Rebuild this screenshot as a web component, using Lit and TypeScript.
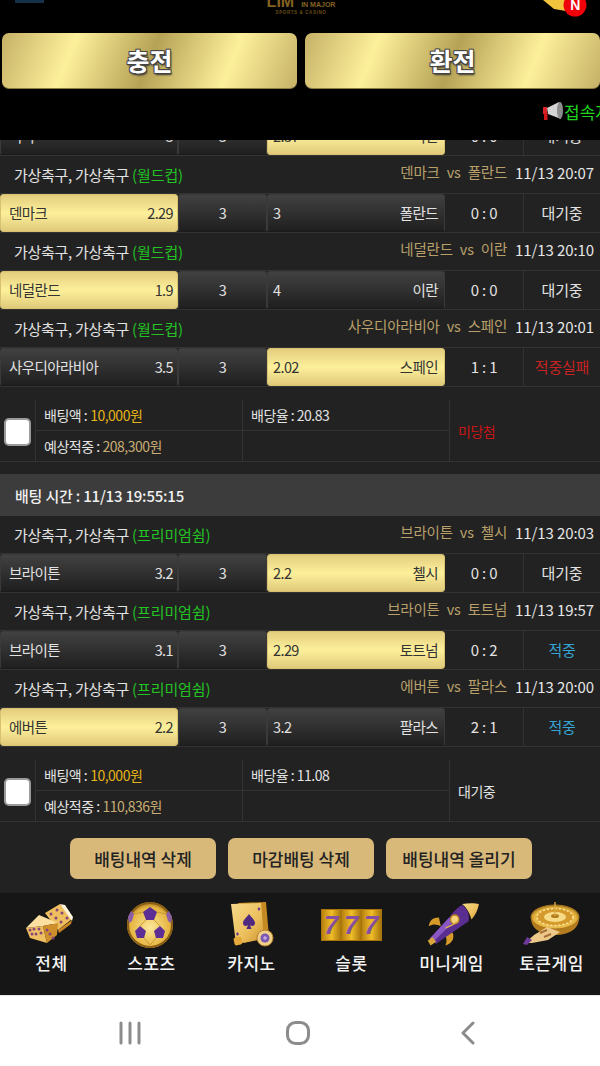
import { LitElement, html, css, svg } from "lit";
import { customElement } from "lit/decorators.js";

const LEAGUE_CUP = "월드컵";
const LEAGUE_PREMIER = "프리미엄쉼";

type Match = {
  league: string;
  home: string;
  away: string;
  time: string;
  homeOdd: string;
  awayOdd: string;
  pick: "home" | "away";
  score: string;
  status: string;
  statusKind?: "fail" | "hit";
};

const firstSlip: Match[] = [
  { league: LEAGUE_CUP, home: "덴마크", away: "폴란드", time: "11/13 20:07", homeOdd: "2.29", awayOdd: "3", pick: "home", score: "0 : 0", status: "대기중" },
  { league: LEAGUE_CUP, home: "네덜란드", away: "이란", time: "11/13 20:10", homeOdd: "1.9", awayOdd: "4", pick: "home", score: "0 : 0", status: "대기중" },
  { league: LEAGUE_CUP, home: "사우디아라비아", away: "스페인", time: "11/13 20:01", homeOdd: "3.5", awayOdd: "2.02", pick: "away", score: "1 : 1", status: "적중실패", statusKind: "fail" },
];

const secondSlip: Match[] = [
  { league: LEAGUE_PREMIER, home: "브라이튼", away: "첼시", time: "11/13 20:03", homeOdd: "3.2", awayOdd: "2.2", pick: "away", score: "0 : 0", status: "대기중" },
  { league: LEAGUE_PREMIER, home: "브라이튼", away: "토트넘", time: "11/13 19:57", homeOdd: "3.1", awayOdd: "2.29", pick: "away", score: "0 : 2", status: "적중", statusKind: "hit" },
  { league: LEAGUE_PREMIER, home: "에버튼", away: "팔라스", time: "11/13 20:00", homeOdd: "2.2", awayOdd: "3.2", pick: "home", score: "2 : 1", status: "적중", statusKind: "hit" },
];

const clipped: Match = { league: LEAGUE_CUP, home: "미국", away: "이란", time: "", homeOdd: "3", awayOdd: "2.37", pick: "away", score: "0 : 0", status: "대기중" };

const goldDefs = svg`
  <linearGradient id="g1" x1="0" y1="0" x2="1" y2="1">
    <stop offset="0" stop-color="#f6d98a" /><stop offset=".6" stop-color="#ecbf5c" /><stop offset="1" stop-color="#c98f2c" />
  </linearGradient>
  <radialGradient id="g2" cx=".5" cy=".55" r=".6">
    <stop offset="0" stop-color="#fbe79a" /><stop offset=".72" stop-color="#e6b540" /><stop offset="1" stop-color="#80570f" />
  </radialGradient>
`;

const dot = (x: number, y: number) => svg`<circle cx=${x} cy=${y} r="1.500" fill="#86467e" />`;

const diceIcon = svg`<svg viewBox="0 0 60 48" width="60" height="48">
  <polygon points="25,12 40,3 52,18 38,29" fill="#efbe5e" />
  <polygon points="40,3 45,4 53,16 52,20" fill="#fff4dc" />
  <polygon points="38,29 52,19 51,23 39,32" fill="#c98524" />
  ${dot(31, 13)} ${dot(37, 9)} ${dot(36, 17)} ${dot(42, 12)} ${dot(41, 21)} ${dot(47, 17)}
  <polygon points="19,14 6,27 23,25 38,22" fill="#fbe0a0" />
  <polygon points="6,27 23,25 27,42 10,37" fill="#f0bf62" />
  <polygon points="23,25 38,22 37,34 27,42" fill="#cf8f2a" />
  ${dot(10, 29)} ${dot(14, 28)} ${dot(19, 28)} ${dot(12, 33)} ${dot(16, 33)} ${dot(21, 32)}
  ${dot(27, 29)} ${dot(30, 33)} ${dot(33, 37)}
</svg>`;

const ballIcon = svg`<svg viewBox="0 0 60 48" width="60" height="48">
  <defs>${goldDefs}</defs>
  <circle cx="30" cy="24" r="23" fill="url(#g2)" />
  <circle cx="30" cy="24" r="22" fill="none" stroke="#8a5e16" stroke-width="2" />
  <polygon points="30,6 37,11 34,19 26,19 23,11" fill="#5d2f94" />
  <polygon points="20,25 26,30 24,37 17,37 15,30" fill="#5d2f94" />
  <polygon points="40,25 45,30 43,37 36,37 34,30" fill="#5d2f94" />
  <polygon points="11,10 14,13 12,20 9,22 8,16" fill="#8a5fa8" />
  <polygon points="49,10 52,16 51,22 48,20 46,13" fill="#8a5fa8" />
  <path d="M26 19 L20 25 M34 19 L40 25 M24 37 L30 44 L36 37 M23 11 L14 13 M37 11 L46 13" stroke="#c89a38" fill="none" />
</svg>`;

const cardsIcon = svg`<svg viewBox="0 0 60 48" width="60" height="48">
  <defs>${goldDefs}</defs>
  <polygon points="18,2 46,1 49,36 24,42" fill="#c58a22" />
  <polygon points="11,3 41,2 44,38 16,43" fill="url(#g1)" />
  <path d="M29 13 C32 17 35 19 35 22 C35 25 32 26 30 24 L31.500 28 L26.500 28 L28 24 C26 26 23 25 23 22 C23 19 26 17 29 13 Z" fill="#4f2a80" />
  <path d="M16 33 l1.500 -2 l1.500 2 l-1.500 2 z" fill="#6a3b8f" />
  <path d="M39 6 l1.500 2 l-1.500 2 l-1.500 -2 z" fill="#6a3b8f" />
  <rect x="14" y="36" width="8" height="8" rx="2" fill="#e5a93b" transform="rotate(-12 18 40)" />
  <circle cx="45" cy="37" r="8" fill="#efd08a" stroke="#b4812a" />
  <circle cx="45" cy="37" r="4.500" fill="#7a58b0" />
  <circle cx="45" cy="37" r="1.800" fill="#c8a8e8" />
</svg>`;

const slotIcon = svg`<svg viewBox="0 0 65 32" width="65" height="32">
  <defs>
    <linearGradient id="reel" x1="0" x2="1" y1="0" y2="0">
      <stop offset="0" stop-color="#b98310" /><stop offset=".5" stop-color="#f0bd28" /><stop offset="1" stop-color="#a8750d" />
    </linearGradient>
  </defs>
  <g transform="translate(3 0)">
    <rect width="61" height="32" fill="#a8750d" />
    <rect x="1" y="1" width="19" height="30" fill="url(#reel)" />
    <rect x="21" y="1" width="19" height="30" fill="url(#reel)" />
    <rect x="41" y="1" width="19" height="30" fill="url(#reel)" />
    <text class="slot-text" x="10.500" y="25" text-anchor="middle">7</text>
    <text class="slot-text" x="30.500" y="25" text-anchor="middle">7</text>
    <text class="slot-text" x="50.500" y="25" text-anchor="middle">7</text>
  </g>
</svg>`;

const rocketIcon = svg`<svg viewBox="0 0 60 48" width="60" height="48">
  <defs>${goldDefs}</defs>
  <g transform="translate(5 0) scale(.93 .97)">
    <path d="M15 17 C8 17 5 20 4 26 C9 23 13 24 17 26 Z" fill="#d69a28" />
    <path d="M30 33 C32 40 28 44 22 46 C24 41 23 37 21 33 Z" fill="#d69a28" />
    <path d="M5 39 L26 17 C31 10 36 6 40 4 C46 8 48 14 47 21 L36 28 L12 44 Z" fill="#5a2d90" />
    <path d="M5 39 L26 17 L30 22 L9 42 Z" fill="#8a58c4" />
    <path d="M40 3 C46 2 54 2 58 3 C57 9 54 15 50 19 C48 12 45 7 40 3 Z" fill="url(#g1)" />
    <circle cx="32" cy="19" r="4.500" fill="#f4d27a" stroke="#b8821f" stroke-width="1.500" />
    <path d="M3 41 L8 37 L12 42 L6 46 Z" fill="#d9a53a" />
    <path d="M22 28 C28 26 32 23 35 21" stroke="#e0b04a" stroke-width="1.500" fill="none" />
  </g>
</svg>`;

const rouletteIcon = svg`<svg viewBox="0 0 60 48" width="60" height="48">
  <defs>${goldDefs}</defs>
  <path d="M11 17 C11 29 23 34 35 34 C47 34 59 29 59 17 Z" fill="#b47c1e" />
  <ellipse cx="35" cy="16" rx="24" ry="12" fill="url(#g2)" stroke="#a8741c" />
  <ellipse cx="35" cy="16" rx="18" ry="8.500" fill="#d49a2c" stroke="#fbe39a" stroke-dasharray="2 2" stroke-width="1.500" />
  <ellipse cx="35" cy="16" rx="11" ry="5" fill="#f7dc88" />
  <ellipse cx="35" cy="15" rx="4" ry="2" fill="#b47c1e" />
  <rect x="34.300" y="1" width="1.400" height="14" fill="#d8a93f" />
  <path d="M5 42 L14 34 L27 26 L40 31 L28 39 L12 42 Z" fill="#ecc988" />
  <path d="M3 43 L7 36 L12 39 L7 44 Z" fill="#6b3a98" />
  <path d="M20 32 l7 -3 M24 36 l7 -3" stroke="#a8703a" stroke-width="2" />
</svg>`;

const navItems = [
  { label: "전체", icon: diceIcon },
  { label: "스포츠", icon: ballIcon },
  { label: "카지노", icon: cardsIcon },
  { label: "슬롯", icon: slotIcon },
  { label: "미니게임", icon: rocketIcon },
  { label: "토큰게임", icon: rouletteIcon },
];

@customElement("app-root")
export class AppRoot extends LitElement {
  static styles = css`
    :host {
      display: flex;
      flex-direction: column;
      width: 600px;
      height: 1066px;
      overflow: hidden;
      background: #222;
      color: #e2e2e2;
      font-family: "Noto Sans CJK KR", "Noto Sans", sans-serif;
      font-size: 14px;
      letter-spacing: -0.5px;
    }
    * { box-sizing: border-box; }

    .header { flex: none; height: 140px; background: #000; overflow: hidden; }
    .top {
      height: 33px;
      display: grid;
      grid-template-columns: 1fr auto 1fr;
      overflow: hidden;
    }
    .flag { width: 29px; height: 3px; margin-left: 15px; background: #16304a; }
    .logo { display: flex; flex-direction: column; align-items: center; margin-top: -5px; margin-left: 2px; color: #85621f; }
    .logo-main { display: flex; align-items: flex-end; gap: 7px; height: 13px; }
    .logo-lim { font: 700 16px/13px "Liberation Sans", sans-serif; letter-spacing: 0; }
    .logo-sub { font: 700 7px/7px "Liberation Sans", sans-serif; letter-spacing: 0; }
    .logo-tag { font: 700 4.500px/5px "Liberation Sans", sans-serif; letter-spacing: 0.6px; color: #6b4e18; margin-top: 2px; }
    .bell { justify-self: end; display: block; }
    .bell text { font: 700 14px "Liberation Sans", sans-serif; fill: #fff; }

    .charge { display: grid; grid-template-columns: 295px 295px; gap: 8px; padding-left: 2px; }
    .gold-btn {
      height: 56px;
      padding-bottom: 2px;
      border-radius: 7px;
      display: flex;
      align-items: center;
      justify-content: center;
      background: linear-gradient(112deg, #c6b166 0%, #fdf09b 24%, #b6a255 50%, #fdf09b 76%, #c6b166 100%);
      border-bottom: 1px solid #8c7c44;
      color: #fff;
      font-size: 25px;
      font-weight: 700;
      letter-spacing: 0;
      text-shadow: -1px -1px 0 #444, 1px -1px 0 #444, -1px 1px 0 #444, 1px 1px 0 #444, 1px 2px 2px #333;
    }
    .notice {
      display: flex;
      align-items: center;
      height: 22px;
      margin-top: 11px;
      padding-left: 542px;
      white-space: nowrap;
      color: #1fd41f;
      font-size: 17px;
      letter-spacing: 0;
    }
    .notice svg { flex: none; }

    .list { flex: 1; min-height: 0; overflow: hidden; background: #222; }
    .peek { height: 16px; overflow: hidden; display: flex; flex-direction: column; justify-content: flex-end; }
    .peek .match { flex: none; }

    .title {
      height: 38px;
      border-bottom: 1px solid #333;
      display: flex;
      justify-content: space-between;
      padding: 0 6px 0 14px;
    }
    .title .league { padding-top: 9px; line-height: 20px; font-size: 15px; letter-spacing: -0.3px; }
    .title .league span { color: #22c322; letter-spacing: -0.1px; }
    .title .fixture { padding-top: 6px; line-height: 20px; display: flex; gap: 8px; }
    .fixture .teams { color: #b9a06a; display: flex; gap: 7px; font-size: 14.500px; letter-spacing: -0.2px; }
    .fixture .when { color: #e6e6e6; padding-top: 1px; font-size: 15px; letter-spacing: -0.1px; }

    .match {
      height: 39px;
      border-bottom: 1px solid #333;
      display: grid;
      grid-template-columns: 178px 89px 178px 79px 76px;
    }
    .cell {
      display: flex;
      align-items: center;
      justify-content: space-between;
      padding: 0 4px 2px 8px;
      border: 1px solid #3a3a3a;
      border-bottom-color: #1b1b1b;
      border-radius: 3px;
      background: linear-gradient(#414141, #1f1f1f);
      color: #e2e2e2;
      font-size: 14.500px;
      letter-spacing: -0.6px;
    }
    .cell.picked {
      background: linear-gradient(#e3cd7d, #fdf09b 50%, #e0ca7a);
      border-color: #d8c271;
      color: #333;
    }
    .cell.away { padding: 0 6px 2px 5px; }
    .cell.draw { justify-content: center; padding: 0 0 2px; }
    .plain {
      display: flex;
      align-items: center;
      justify-content: center;
      padding-bottom: 2px;
      border-right: 1px solid #333;
      font-size: 15px;
      letter-spacing: -0.2px;
    }
    .plain.last { border-right: 0; }
    .plain.fail { color: #c92222; }
    .plain.hit { color: #36a4d4; }

    .slip {
      margin: 13px 0 12px;
      height: 62px;
      border-bottom: 1px solid #333;
      display: grid;
      grid-template-columns: 36px 207px 207px 150px;
      grid-template-rows: 31px 30px;
    }
    .slip.end { margin-bottom: 0; }
    .check {
      grid-column: 1;
      grid-row: 1 / 3;
      display: flex;
      align-items: center;
      padding-left: 4px;
      padding-top: 3px;
      border-right: 1px solid #333;
    }
    .box { width: 27px; height: 28px; background: #fff; border: 2px solid #9a9a9a; border-radius: 5px; }
    .info { display: flex; align-items: center; padding-left: 8px; border-right: 1px solid #333; gap: 3px; }
    .info.r1 { border-bottom: 1px solid #333; }
    .amount { color: #e7b416; }
    .payout { color: #c8ad74; }
    .result { grid-column: 4; grid-row: 1 / 3; display: flex; align-items: center; padding-left: 8px; }
    .result.lost { color: #c81414; }

    .band {
      height: 42px;
      background: #3c3c3c;
      display: flex;
      align-items: center;
      padding-left: 15px;
      color: #f0f0f0;
      font-size: 15px;
      font-weight: 500;
      letter-spacing: -0.2px;
    }

    .actions { display: flex; justify-content: center; gap: 12px; padding: 16px 68px 0 70px; }
    .actions div {
      width: 146px;
      height: 41px;
      background: #d8b97a;
      border-radius: 7px;
      display: flex;
      align-items: center;
      justify-content: center;
      color: #222;
      font-size: 17px;
      font-weight: 500;
      letter-spacing: 0;
    }

    .nav {
      flex: none;
      height: 102px;
      background: #161616;
      display: grid;
      grid-template-columns: repeat(6, 100px);
    }
    .nav-item { display: flex; flex-direction: column; align-items: center; color: #f4f4f4; font-size: 17px; font-weight: 500; letter-spacing: 0.5px; }
    .nav-icon { height: 48px; margin-top: 8px; display: flex; align-items: center; justify-content: center; }
    .nav-label { margin-top: 2px; padding-left: 3px; line-height: 24px; }
    .slot-text { font: italic 700 26px "Liberation Sans", sans-serif; fill: #86509f; }

    .softkeys {
      flex: none;
      height: 71px;
      background: #fff;
      display: grid;
      grid-template-columns: 260px 76px 264px;
      justify-items: center;
      padding-top: 25px;
      border-top: 1px solid #e8e8e8;
    }
  `;

  private matchRow(m: Match) {
    const home = m.pick === "home" ? "picked" : "";
    const away = m.pick === "away" ? "picked" : "";
    return html`
      <div class="match">
        <div class="cell ${home}"><span>${m.home}</span><span>${m.homeOdd}</span></div>
        <div class="cell draw">3</div>
        <div class="cell away ${away}"><span>${m.awayOdd}</span><span>${m.away}</span></div>
        <div class="plain">${m.score}</div>
        <div class="plain last ${m.statusKind ?? ""}">${m.status}</div>
      </div>
    `;
  }

  private block(m: Match) {
    return html`
      <div class="title">
        <div class="league">가상축구, 가상축구 <span>(${m.league})</span></div>
        <div class="fixture">
          <div class="teams"><span>${m.home}</span><span>vs</span><span>${m.away}</span></div>
          <div class="when">${m.time}</div>
        </div>
      </div>
      ${this.matchRow(m)}
    `;
  }

  private slip(payout: string, rate: string, result: string, lost: boolean, end: boolean) {
    return html`
      <div class="slip ${end ? "end" : ""}">
        <div class="check"><div class="box"></div></div>
        <div class="info r1">배팅액 : <span class="amount">10,000원</span></div>
        <div class="info r1">배당율 : ${rate}</div>
        <div class="result ${lost ? "lost" : ""}">${result}</div>
        <div class="info">예상적중 : <span class="payout">${payout}</span></div>
        <div class="info"></div>
      </div>
    `;
  }

  render() {
    return html`
      <div class="header">
        <div class="top">
          <div class="flag"></div>
          <div class="logo">
            <div class="logo-main"><span class="logo-lim">LIM</span><span class="logo-sub">IN MAJOR</span></div>
            <div class="logo-tag">SPORTS &amp; CASINO</div>
          </div>
          <svg class="bell" viewBox="0 0 60 18" width="60" height="18">
            <polygon points="3,0 26,0 26,11 14,9" fill="#f2c33c" />
            <circle cx="35" cy="5" r="11.500" fill="#f00008" />
            <text x="35" y="10" text-anchor="middle">N</text>
          </svg>
        </div>
        <div class="charge">
          <div class="gold-btn">충전</div>
          <div class="gold-btn">환전</div>
        </div>
        <div class="notice">
          <svg viewBox="0 0 22 22" width="22" height="22">
            <polygon points="5,8 17,2 19,19 6,14" fill="#d4d4d4" />
            <ellipse cx="18" cy="10.500" rx="3" ry="8.500" fill="#8c8c8c" />
            <rect x="1" y="7" width="4" height="7" fill="#e02222" />
            <rect x="2" y="13" width="3.500" height="7" fill="#d01818" />
          </svg>
          <span>접속자</span>
        </div>
      </div>

      <div class="list">
        <div class="peek">${this.matchRow(clipped)}</div>
        ${firstSlip.map((m) => this.block(m))}
        ${this.slip("208,300원", "20.83", "미당첨", true, false)}
        <div class="band">배팅 시간 : 11/13 19:55:15</div>
        ${secondSlip.map((m) => this.block(m))}
        ${this.slip("110,836원", "11.08", "대기중", false, true)}
        <div class="actions">
          <div>배팅내역 삭제</div>
          <div>마감배팅 삭제</div>
          <div>배팅내역 올리기</div>
        </div>
      </div>

      <div class="nav">
        ${navItems.map(
          (n) => html`
            <div class="nav-item">
              <div class="nav-icon">${n.icon}</div>
              <div class="nav-label">${n.label}</div>
            </div>
          `
        )}
      </div>

      <div class="softkeys">
        <svg viewBox="0 0 24 24" width="24" height="24">
          <path d="M3 2 V22 M12 2 V22 M21 2 V22" stroke="#8c8c8c" stroke-width="3" stroke-linecap="round" fill="none" />
        </svg>
        <svg viewBox="0 0 24 24" width="24" height="24">
          <rect x="1.500" y="1.500" width="21" height="21" rx="8" stroke="#8c8c8c" stroke-width="3" fill="none" />
        </svg>
        <svg viewBox="0 0 24 24" width="24" height="24">
          <path d="M17 2 L7 12 L17 22" stroke="#8c8c8c" stroke-width="3" stroke-linecap="round" stroke-linejoin="round" fill="none" />
        </svg>
      </div>
    `;
  }
}
